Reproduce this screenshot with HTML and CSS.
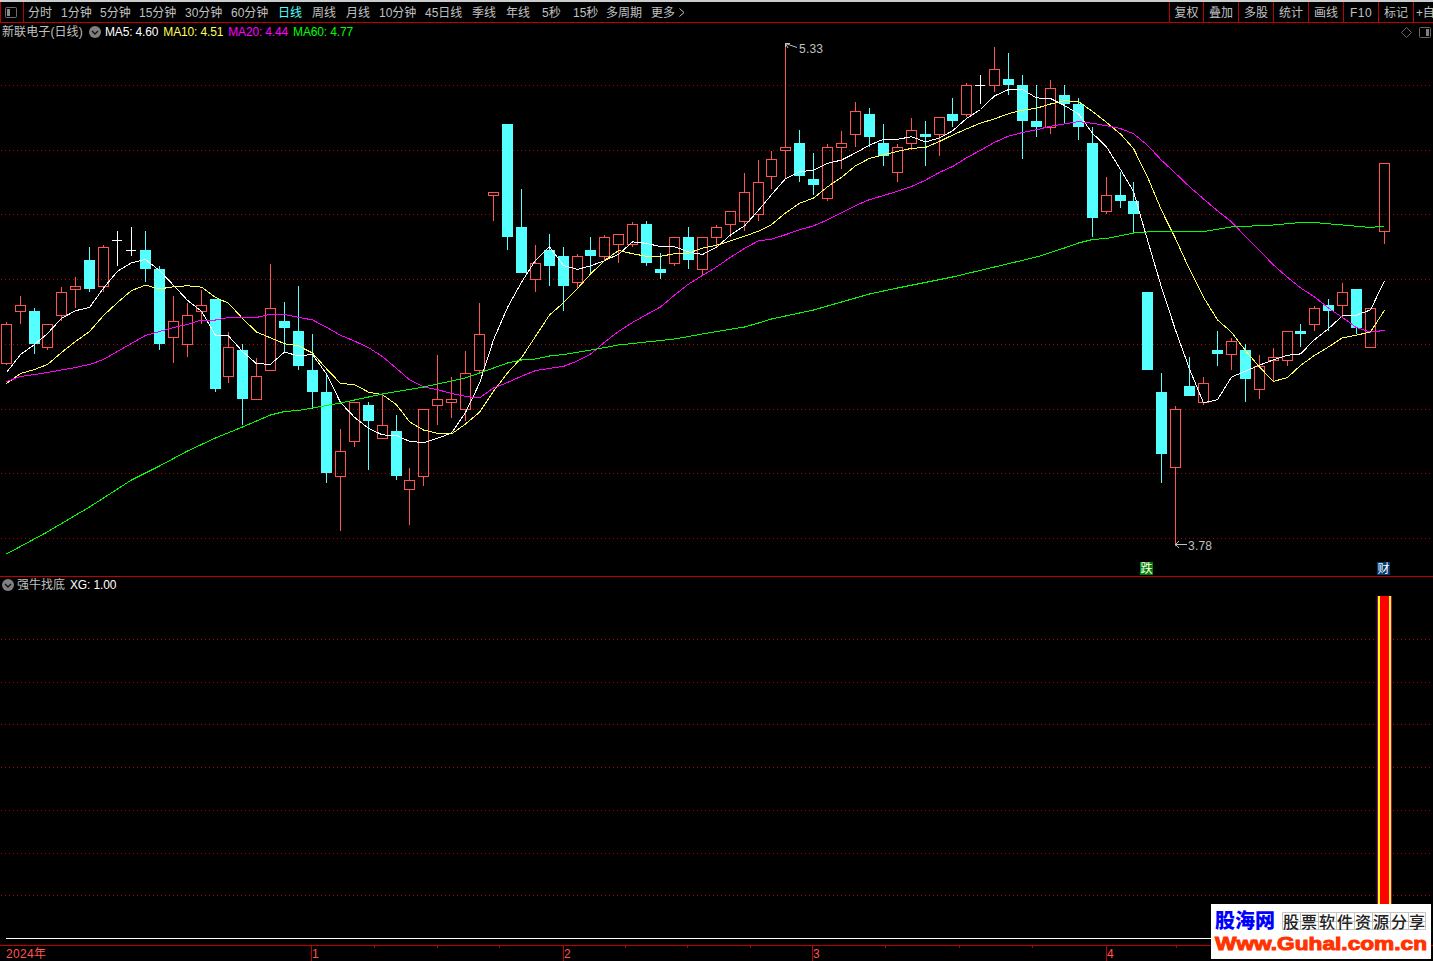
FILE: index.html
```html
<!DOCTYPE html>
<html lang="zh-CN">
<head>
    <meta charset="UTF-8">
    <meta name="viewport" content="width=device-width, initial-scale=1.0">
    <title>新联电子(日线)</title>
    <link rel="stylesheet" href="styles.css">
</head>
<body>
    <header class="toolbar">
        <div class="layout-btn">
            <svg width="12" height="11" viewBox="0 0 12 11">
                <rect x="0.5" y="0.5" width="11" height="10" rx="1" fill="none" stroke="#6e6e6e"/>
                <rect x="2" y="2" width="3" height="7" fill="#8a8a8a"/>
            </svg>
        </div>
        <nav class="periods">
            <span>分时</span>
            <span>1分钟</span>
            <span>5分钟</span>
            <span>15分钟</span>
            <span>30分钟</span>
            <span>60分钟</span>
            <span class="active">日线</span>
            <span>周线</span>
            <span>月线</span>
            <span>10分钟</span>
            <span>45日线</span>
            <span>季线</span>
            <span>年线</span>
            <span>5秒</span>
            <span>15秒</span>
            <span>多周期</span>
            <span>更多</span>
            <svg width="6" height="9" viewBox="0 0 6 9"><path d="M0.5 0.5L5 4.5L0.5 8.5" fill="none" stroke="#c0c0c0"/></svg>
        </nav>
        <div class="tools">
            <span>复权</span>
            <span>叠加</span>
            <span>多股</span>
            <span>统计</span>
            <span>画线</span>
            <span class="f10">F10</span>
            <span>标记</span>
            <span class="add">+自</span>
        </div>
    </header>

    <main>
        <section class="panel panel-main">
            <div class="info">
                <span class="name">新联电子(日线)</span>
                <svg class="fold" width="12" height="12" viewBox="0 0 12 12"><circle cx="6" cy="6" r="6" fill="#808080"/><path d="M3 5L6 8L9 5" fill="none" stroke="#111" stroke-width="1.4"/></svg>
                <span class="ma ma5">MA5: 4.60</span>
                <span class="ma ma10">MA10: 4.51</span>
                <span class="ma ma20">MA20: 4.44</span>
                <span class="ma ma60">MA60: 4.77</span>
            </div>
            <svg class="chart" id="kline" width="1433" height="553" viewBox="0 23 1433 553">
                <g id="mainGrid"></g>
                <g id="candles"></g>
                <g id="lines"></g>
                <g class="mark">
                    <path d="M785.5 43.5L797 47.5M785.5 47V43.5H790M785.5 43.5L788 48"/>
                    <text x="799" y="53" textLength="24">5.33</text>
                    <path d="M1175 544.5H1187M1179 541L1175.5 544.5L1179 548"/>
                    <text x="1188" y="550" textLength="24">3.78</text>
                </g>
                <g class="badge">
                    <rect x="1140" y="562" width="13" height="13" fill="#008000"/>
                    <text x="1140.5" y="573">跌</text>
                    <rect x="1377" y="562" width="13" height="13" fill="#003a70"/>
                    <text x="1377.5" y="573">财</text>
                </g>
                <g fill="none" stroke="#686868">
                    <path d="M1406.5 27.5L1411.5 32.5L1406.5 37.5L1401.5 32.5Z"/>
                    <rect x="1419.5" y="27.5" width="11" height="10" rx="1"/>
                    <rect x="1426" y="29" width="3" height="7" fill="#808080" stroke="none"/>
                </g>
            </svg>
        </section>

        <section class="panel panel-sub">
            <div class="info">
                <svg class="fold" width="12" height="12" viewBox="0 0 12 12"><circle cx="6" cy="6" r="6" fill="#808080"/><path d="M3 5L6 8L9 5" fill="none" stroke="#111" stroke-width="1.4"/></svg>
                <span class="name">强牛找底</span>
                <span class="ma">XG: 1.00</span>
            </div>
            <svg class="chart" width="1433" height="368" viewBox="0 577 1433 368">
                <g id="subGrid"></g>
                <rect x="6" y="938" width="1379" height="1" fill="#fff"/>
                <rect x="1377" y="596" width="15" height="343" fill="#a000a0"/>
                <rect x="1378" y="596" width="13" height="343" fill="#ffff00"/>
                <rect x="1380" y="596" width="9" height="343" fill="#ff0000"/>
            </svg>
        </section>
    </main>

    <footer>
        <svg class="chart" id="axis" width="1433" height="16" viewBox="0 945 1433 16"></svg>
    </footer>

    <div class="watermark">
        <svg width="220" height="55" viewBox="0 0 220 55">
            <text class="wm-name" x="4" y="24" textLength="60">股海网</text>
            <path class="wm-grid" d="M71.5 8.5H214.5V25.5H71.5ZM71 17.5H215M89.5 8V26M107.5 8V26M125.5 8V26M143.5 8V26M161.5 8V26M179.5 8V26M197.5 8V26"/>
            <text class="wm-slogan" x="72" y="23.5" textLength="142">股票软件资源分享</text>
            <text class="wm-url" x="4" y="46" textLength="212" lengthAdjust="spacingAndGlyphs">Www.Guhai.com.cn</text>
        </svg>
    </div>

    <script>
        const NS = 'http://www.w3.org/2000/svg';
        const STEP = 13.9225;

        // [类型, 最高, 实体上沿, 实体下沿, 最低]  u 阳线 d 阴线 x 十字星
        const bars = [
            ['u',322,324,363,365], ['u',296,305,311,324], ['d',308,311,344,354], ['u',324,324,347,350],
            ['u',287,292,315,321], ['u',277,286,289,308], ['d',247,260,289,292], ['u',245,247,286,292],
            ['x',231,240,240,266], ['x',227,250,250,256], ['d',231,250,269,282], ['d',266,269,344,350],
            ['u',296,321,337,363], ['u',303,315,344,357], ['u',290,305,311,324], ['d',299,299,389,392],
            ['u',332,347,376,383], ['d',344,350,399,425], ['u',358,376,399,399], ['u',264,308,370,370],
            ['d',302,321,328,353], ['d',286,331,366,370], ['d',334,370,392,409], ['d',373,392,473,483],
            ['u',429,451,476,531], ['u',402,402,441,447], ['d',402,405,421,470], ['u',393,425,438,438],
            ['d',415,431,476,480], ['u',468,480,489,525], ['u',409,409,476,486], ['u',355,399,405,425],
            ['u',377,399,402,418], ['u',351,373,409,421], ['u',303,334,370,374], ['u',192,192,195,221],
            ['d',124,124,237,250], ['d',189,227,273,273], ['u',245,263,279,292], ['d',234,250,266,286],
            ['d',247,256,286,311], ['u',254,256,282,288], ['d',237,250,256,273], ['u',235,237,256,260],
            ['u',234,234,244,263], ['u',222,224,244,247], ['d',221,224,263,266], ['d',253,269,273,279],
            ['u',237,237,263,266], ['d',227,237,260,269], ['u',237,237,269,275], ['u',225,227,237,247],
            ['u',211,211,224,237], ['u',173,192,221,231], ['u',160,182,214,221], ['u',151,159,176,189],
            ['u',43,147,150,178], ['d',130,143,176,182], ['d',153,179,185,195], ['u',144,147,198,201],
            ['u',131,143,147,169], ['u',102,111,134,147], ['d',108,114,137,147], ['d',124,143,156,166],
            ['u',144,147,172,182], ['u',118,130,143,150], ['d',121,134,137,166], ['u',117,117,134,156],
            ['d',98,114,121,127], ['u',83,85,114,117], ['x',75,85,85,104], ['u',47,69,85,92],
            ['d',53,79,85,95], ['d',75,85,121,159], ['d',85,121,127,137], ['u',80,88,127,134],
            ['d',85,95,104,124], ['d',98,104,127,140], ['d',127,143,218,237], ['u',177,195,211,214],
            ['d',172,195,201,208], ['d',182,201,214,233], ['d',292,292,370,370], ['d',373,392,454,483],
            ['u',406,409,467,546], ['d',357,386,396,396], ['u',377,383,402,405], ['d',331,350,354,366],
            ['u',338,341,354,370], ['d',344,350,379,402], ['u',355,366,389,399], ['u',348,357,360,382],
            ['u',331,331,360,366], ['d',324,331,334,347], ['u',306,308,324,331], ['d',299,305,311,331],
            ['u',283,292,305,317], ['d',289,289,328,334], ['u',308,308,347,347], ['u',163,163,231,244]
        ];

        // 均线在窗口左侧的起始段
        const head = {
            5: [372, 354, 344, 333],
            10: [383, 373, 369, 364, 352, 341, 331, 315, 302],
            20: [381, 376, 374, 372, 369.5, 367, 364, 359, 351, 343, 335, 331, 327, 324, 319.5, 319.5, 317, 317, 317]
        };

        const ma60 = [[6,554],[45,533],[89,507],[131,480],[159,466],[187,451],[215,438],[242,427],[270,415],[284,411.5],
            [298,410.5],[340,403],[382,394],[423,387],[465,378],[507,363],[521,360],[535,359],[549,356],[563,354.5],
            [591,350],[618,345],[646,342],[674,339],[702,334],[744,327],[758,323],[771,319],[813,310],[855,298],
            [869,294],[897,288],[952,277],[994,267],[1036,257],[1064,248],[1078,243],[1092,239.5],[1106,238.5],
            [1133,233],[1147,232],[1203,231.5],[1231,227],[1273,225],[1300,222.5],[1314,222.5],[1342,225],[1370,227.5],[1384,226]];

        function add(parent, tag, attrs, text) {
            const el = document.createElementNS(NS, tag);
            for (const k in attrs) el.setAttribute(k, attrs[k]);
            if (text) el.textContent = text;
            parent.appendChild(el);
            return el;
        }

        function barX(i) {
            return Math.floor(6.2 + i * STEP);
        }

        function drawGrid(id, rows) {
            const g = document.getElementById(id);
            rows.forEach(y => add(g, 'path', { d: `M1 ${y + 0.5}H1431`, class: 'grid-line' }));
        }

        function drawBars() {
            const g = document.getElementById('candles');
            bars.forEach(([type, high, top, bottom, low], i) => {
                const x = barX(i);
                const c = x + 0.5;
                if (type === 'x') {
                    add(g, 'path', { d: `M${c} ${high}V${low}M${x - 5} ${top + 0.5}H${x + 5}`, class: 'flat' });
                } else if (type === 'd') {
                    add(g, 'path', { d: `M${c} ${high}V${low}`, class: 'down' });
                    add(g, 'rect', { x: x - 5, y: top, width: 11, height: bottom - top, class: 'down-body' });
                } else {
                    add(g, 'path', { d: `M${c} ${high}V${top}M${c} ${bottom}V${low}`, class: 'up' });
                    add(g, 'rect', { x: x - 4.5, y: top + 0.5, width: 10, height: bottom - top, class: 'up' });
                }
            });
        }

        function drawMa(n) {
            const close = bars.map(b => b[0] === 'd' ? b[3] : b[2]);
            const pts = close.map((v, i) => {
                let y = head[n][i];
                if (i >= n - 1) {
                    y = close.slice(i - n + 1, i + 1).reduce((a, b) => a + b, 0) / n;
                }
                return `${barX(i) + 0.5},${(y + 0.5).toFixed(1)}`;
            });
            add(document.getElementById('lines'), 'polyline', { points: pts.join(' '), class: 'line-ma' + n });
        }

        function drawAxis() {
            const svg = document.getElementById('axis');
            add(svg, 'path', { d: 'M0 945.5H1433', class: 'axis-line' });
            [311, 563, 812, 1106].forEach((x, i) => {
                add(svg, 'path', { d: `M${x + 0.5} 945V961`, class: 'axis-line' });
                add(svg, 'text', { x: x + 1, y: 958 }, String(i + 1));
            });
            [374, 437, 499, 625, 687, 750, 885, 959, 1032, 1176].forEach(x => {
                add(svg, 'path', { d: `M${x + 0.5} 945V948`, class: 'axis-line' });
            });
            add(svg, 'text', { x: 6, y: 958, textLength: 40 }, '2024年');
        }

        drawGrid('mainGrid', [85, 150, 214, 279, 344, 409, 473, 538]);
        drawGrid('subGrid', [639, 682, 724, 767, 810, 853, 895]);
        drawBars();
        drawMa(5);
        drawMa(10);
        drawMa(20);
        add(document.getElementById('lines'), 'polyline', { points: ma60.map(p => `${p[0] + 0.5},${p[1]}`).join(' '), class: 'line-ma60' });
        drawAxis();
    </script>
</body>
</html>
```
FILE: styles.css
```css
body {
    margin: 0;
    width: 1433px;
    height: 961px;
    overflow: hidden;
    background: #000;
    color: #c0c0c0;
    font-family: "Liberation Sans", "Noto Sans CJK SC", sans-serif;
    font-size: 12px;
    position: relative;
}

.toolbar {
    box-sizing: border-box;
    height: 23px;
    display: flex;
    border-top: 2px solid #c8cccc;
    border-bottom: 1px solid #c00000;
    line-height: 21px;
    white-space: nowrap;
}

.layout-btn {
    box-sizing: border-box;
    width: 24px;
    padding-left: 4px;
    border-left: 1px solid #c00000;
    border-right: 1px solid #c00000;
    display: flex;
    align-items: center;
}

.periods {
    flex: 1;
    display: grid;
    grid-template-columns: 33px 39px 39px 46px 46px 47px 34px 34px 33px 46px 47px 34px 36px 31px 33px 45px 28px 6px;
    grid-template-rows: 20px;
    padding-left: 4px;
}

.periods svg {
    align-self: center;
}

.periods span {
    line-height: 22px;
}

.periods .active {
    color: #54ffff;
}

.tools {
    display: grid;
    grid-template-columns: 34px 35px 35px 35px 35px 35px 35px 20px;
    grid-template-rows: 20px;
}

.tools span {
    border-left: 1px solid #c00000;
    text-align: center;
    line-height: 22px;
    overflow: hidden;
}

.tools .f10 {
    letter-spacing: 0.5px;
}

.tools .add {
    text-align: left;
    padding-left: 2px;
    letter-spacing: -0.3px;
}

.panel {
    position: relative;
    border-bottom: 1px solid #c00000;
}

.panel-sub {
    border-bottom: none;
}

.info {
    position: absolute;
    top: 0;
    left: 2px;
    height: 18px;
    line-height: 18px;
    display: flex;
    align-items: center;
    white-space: nowrap;
}

.panel-main .name {
    width: 87px;
    letter-spacing: 0.1px;
}

.panel-main .fold {
    margin-right: 4px;
}

.panel-main .ma {
    margin-right: 5px;
}

.ma {
    color: #fff;
    letter-spacing: -0.15px;
}

.ma10 {
    color: #ffff54;
}

.ma20 {
    color: #ff00ff;
}

.ma60 {
    color: #00ff00;
}

.panel-sub .info {
    left: 2px;
    top: -1px;
}

.panel-sub .name {
    margin: 0 5px 0 3px;
    line-height: 20px;
}

.chart {
    display: block;
}

.grid-line {
    stroke: #b00000;
    stroke-dasharray: 1 3;
    shape-rendering: crispEdges;
}

.up {
    fill: none;
    stroke: #ff5454;
    shape-rendering: crispEdges;
}

.down {
    stroke: #54ffff;
    shape-rendering: crispEdges;
}

.down-body {
    fill: #54ffff;
}

.flat {
    stroke: #fff;
    shape-rendering: crispEdges;
}

polyline {
    fill: none;
    stroke-width: 1;
    shape-rendering: crispEdges;
}

.line-ma5 {
    stroke: #fff;
}

.line-ma10 {
    stroke: #ffff54;
}

.line-ma20 {
    stroke: #ff00ff;
}

.line-ma60 {
    stroke: #00ff00;
}

.mark path {
    fill: none;
    stroke: #c0c0c0;
}

.mark text {
    fill: #c0c0c0;
}

.badge text {
    fill: #fff;
}

.axis-line {
    stroke: #c00000;
    shape-rendering: crispEdges;
}

#axis text {
    fill: #ff5454;
}

.watermark {
    position: absolute;
    left: 1211px;
    top: 904px;
    width: 220px;
    height: 55px;
    background: #fff;
}

.wm-name {
    font: 900 20px "Noto Sans CJK SC", sans-serif;
    fill: #0000ff;
}

.wm-grid {
    fill: none;
    stroke: #c4c4c4;
}

.wm-slogan {
    font: 500 16px "Noto Sans CJK SC", sans-serif;
    fill: #222;
}

.wm-url {
    font: bold 19px "Liberation Sans", sans-serif;
    fill: #ff3300;
    stroke: #ff3300;
    stroke-width: 1;
}
```
